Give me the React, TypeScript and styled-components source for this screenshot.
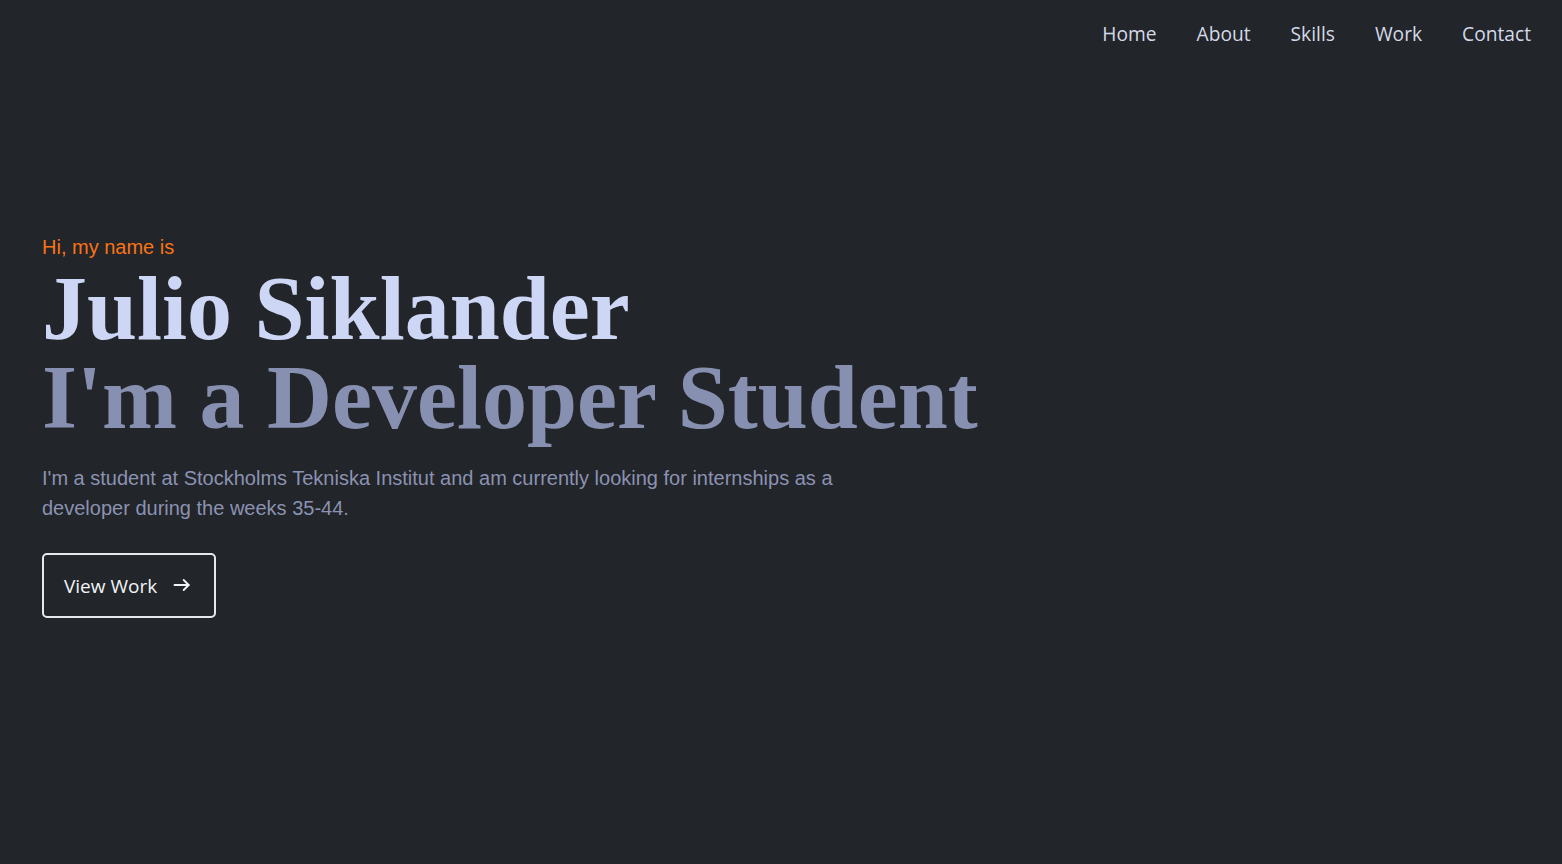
import React from "react";
import styled, { createGlobalStyle } from "styled-components";

const colors = {
  bg: "#222529",
  light: "#d4d9e8",
  name: "#cdd6f4",
  role: "#8790b0",
  text: "#8b92b2",
  accent: "#f97316",
  white: "#f2f4f8",
};

const GlobalStyle = createGlobalStyle`
  * {
    box-sizing: border-box;
  }
  html, body {
    margin: 0;
    padding: 0;
    background-color: ${colors.bg};
  }
  body {
    min-height: 100vh;
    font-family: "Liberation Sans", Arial, sans-serif;
  }
`;

const navLinks = ["Home", "About", "Skills", "Work", "Contact"];

export default function App() {
  return (
    <>
      <GlobalStyle />
      <Page>
        <Header>
          <Nav>
            {navLinks.map((link) => (
              <NavLink key={link} href={`#${link.toLowerCase()}`}>
                {link}
              </NavLink>
            ))}
          </Nav>
        </Header>

        <Hero>
          <Greeting>Hi, my name is</Greeting>
          <Title>
            <Name>Julio Siklander</Name>
            <Role>I'm a Developer Student</Role>
          </Title>
          <Intro>
            I'm a student at Stockholms Tekniska Institut and am currently
            looking for internships as a developer during the weeks 35-44.
          </Intro>
          <Button>
            View Work
            <ArrowIcon />
          </Button>
        </Hero>
      </Page>
    </>
  );
}

const ArrowIcon = () => (
  <svg width="20" height="20" viewBox="0 0 24 24" fill="none" stroke="currentColor" strokeWidth="2.2" strokeLinecap="round" strokeLinejoin="round">
    <path d="M3 12h17" />
    <path d="M14 6l6 6-6 6" />
  </svg>
);

const Page = styled.div`
  min-height: 100vh;
  background-color: ${colors.bg};
  display: flex;
  flex-direction: column;
`;

const Header = styled.header`
  display: flex;
  justify-content: flex-end;
  padding: 20px 31px 0 0;
`;

const Nav = styled.nav`
  display: flex;
  gap: 40px;
`;

const NavLink = styled.a`
  font-family: "Open Sans", "Noto Sans", sans-serif;
  font-size: 19.2px;
  line-height: 28px;
  color: ${colors.light};
  text-decoration: none;
`;

const Hero = styled.section`
  display: flex;
  flex-direction: column;
  align-items: flex-start;
  padding: 188px 42px 0;
`;

const Greeting = styled.p`
  margin: 0;
  font-size: 20px;
  line-height: 23px;
  color: ${colors.accent};
`;

const Title = styled.h1`
  margin: 5px 0 0;
  font-family: "Liberation Serif", "Times New Roman", serif;
  font-weight: 700;
  font-size: 90px;
  line-height: 89px;
`;

const Name = styled.span`
  display: block;
  color: ${colors.name};
`;

const Role = styled.span`
  display: block;
  color: ${colors.role};
`;

const Intro = styled.p`
  margin: 21px 0 0;
  max-width: 820px;
  font-size: 20px;
  line-height: 30px;
  color: ${colors.text};
`;

const Button = styled.button`
  margin-top: 30px;
  display: flex;
  align-items: center;
  gap: 15px;
  height: 65px;
  padding: 0 22px 0 20px;
  background: transparent;
  border: 2px solid #e6e8ee;
  border-radius: 5px;
  color: ${colors.white};
  font-family: "Open Sans", "Noto Sans", sans-serif;
  font-size: 19px;
  cursor: pointer;

  svg {
    margin-top: -2px;
  }
`;
